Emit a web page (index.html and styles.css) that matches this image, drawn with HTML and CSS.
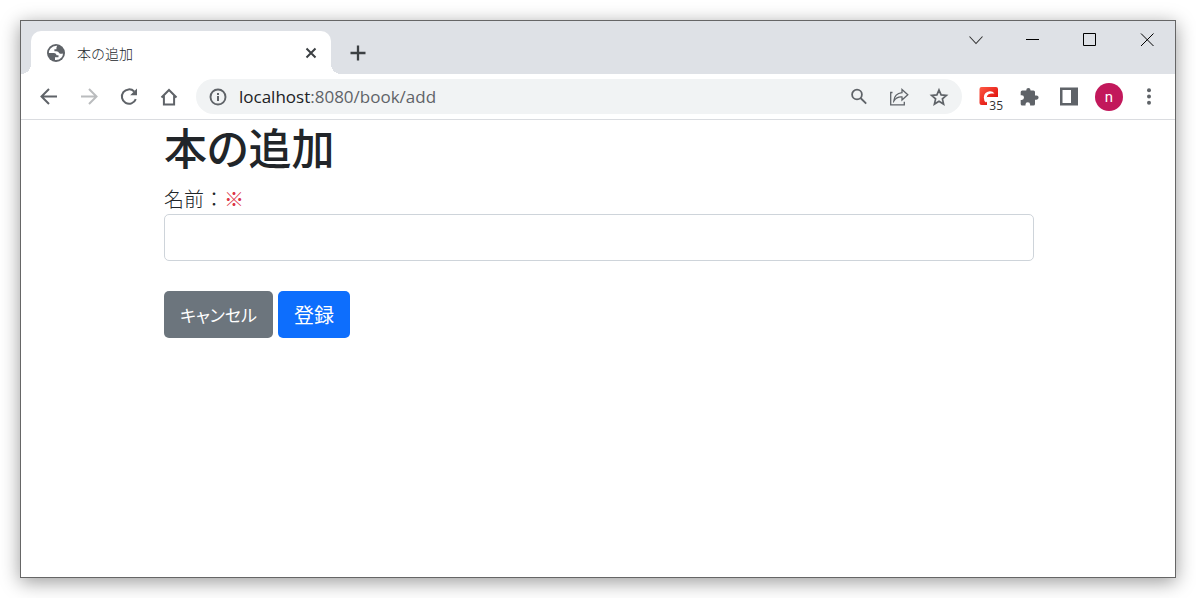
FILE: index.html
```html
<!DOCTYPE html>
<html lang="ja">
<head>
<meta charset="utf-8">
<meta name="viewport" content="width=device-width, initial-scale=1">
<title>本の追加</title>
<link rel="stylesheet" href="styles.css">
</head>
<body>
<div class="window">
  <header class="titlebar">
    <div class="tab">
      <svg class="tab-icon" width="18" height="18" viewBox="0 0 18 18" aria-hidden="true">
        <circle cx="9" cy="9" r="9" fill="#5f6368"/>
        <path d="M10.2 1.8 Q6 1.5 3.5 4.5 Q1.600 6.800 1.900 9 H7.200 Q9.400 9.200 9.600 11.200 H11.500 V13.200 H8 V16 Q12 16.400 14.500 13.500 Q16 11.500 16 9.500 Q13.800 10.300 12.300 9.200 Q11.500 7.200 9 7.300 H7.400 V5.300 H9.400 Q9.200 3 10.200 1.800Z" fill="#fff"/>
      </svg>
      <span class="tab-title">本の追加</span>
      <button class="icon-button" type="button" aria-label="閉じる">
        <svg width="12" height="12" viewBox="0 0 12 12" fill="none" stroke="#3c4043" stroke-width="2"><path d="M1.500 1.500l9 9M10.500 1.500l-9 9"/></svg>
      </button>
    </div>
    <button class="icon-button new-tab" type="button" aria-label="新しいタブ">
      <svg width="16" height="16" viewBox="0 0 16 16" fill="none" stroke="#3c4043" stroke-width="2.300"><path d="M8 .5v15M.5 8h15"/></svg>
    </button>
    <div class="window-controls">
      <button class="icon-button" type="button" aria-label="タブを検索">
        <svg width="14" height="14" viewBox="0 0 14 14" fill="none" stroke="#333" stroke-width="1.100"><path d="M.5 3.500l6.500 7 6.500-7"/></svg>
      </button>
      <button class="icon-button" type="button" aria-label="最小化">
        <svg width="14" height="14" viewBox="0 0 14 14" fill="none" stroke="#000"><path d="M0 6.500h13"/></svg>
      </button>
      <button class="icon-button" type="button" aria-label="最大化">
        <svg width="14" height="14" viewBox="0 0 14 14" fill="none" stroke="#000"><path d="M.5.5h12v12H.5z"/></svg>
      </button>
      <button class="icon-button" type="button" aria-label="ウィンドウを閉じる">
        <svg width="14" height="14" viewBox="0 0 14 14" fill="none" stroke="#000"><path d="M1 .5l12.500 12.500M13.500.5L1 13"/></svg>
      </button>
    </div>
  </header>

  <nav class="toolbar">
    <div class="tools">
      <button class="icon-button" type="button" aria-label="戻る">
        <svg width="20" height="20" viewBox="0 0 20 20" fill="none" stroke="#5f6368" stroke-width="2"><path d="M18 9.500H3M10 2L2.500 9.500l7.500 7.500"/></svg>
      </button>
      <button class="icon-button" type="button" aria-label="進む">
        <svg width="20" height="20" viewBox="0 0 20 20" fill="none" stroke="#babcbe" stroke-width="2"><path d="M2 9.500h15M10 2l7.500 7.500-7.500 7.500"/></svg>
      </button>
      <button class="icon-button" type="button" aria-label="再読み込み">
        <svg width="20" height="20" viewBox="0 0 20 20"><path d="M16.800 12.200A7.200 7.200 0 1 1 15.200 4.500" fill="none" stroke="#5f6368" stroke-width="2"/><path d="M18 1.500v6.800h-6.800z" fill="#5f6368"/></svg>
      </button>
      <button class="icon-button" type="button" aria-label="ホーム">
        <svg width="20" height="20" viewBox="0 0 20 20" fill="none" stroke="#5f6368" stroke-width="2"><path d="M2.500 10.500L10 3l7.500 7.500M4.900 8.800v8.700h10.200V8.800"/></svg>
      </button>
    </div>
    <div class="address">
      <svg width="18" height="18" viewBox="0 0 18 18" aria-hidden="true"><circle cx="9" cy="9" r="7.500" fill="none" stroke="#5f6368" stroke-width="1.900"/><path d="M8 8h2v5H8zM8 5h2v1.900H8z" fill="#5f6368"/></svg>
      <span class="url"><span class="host">localhost</span>:8080/book/add</span>
      <div class="tools">
        <button class="icon-button" type="button" aria-label="ズーム">
          <svg width="20" height="20" viewBox="0 0 20 20" fill="none" stroke="#5f6368" stroke-width="1.800"><circle cx="8" cy="7.500" r="4.900"/><path d="M11.500 11l5.700 5.700"/></svg>
        </button>
        <button class="icon-button" type="button" aria-label="共有">
          <svg width="20" height="20" viewBox="0 0 20 20" fill="none" stroke="#5f6368" stroke-width="1.300"><path d="M3.500 5.500H1.700v12.300h13.600v-3"/><path d="M13 2.500l5.800 5.300-5.800 5.200v-3Q8 9.500 4.800 14Q5.500 6.500 13 5.700z"/></svg>
        </button>
        <button class="icon-button" type="button" aria-label="ブックマーク">
          <svg width="20" height="20" viewBox="0 0 20 20" fill="none" stroke="#5f6368" stroke-width="1.700"><path d="M10 3l2.100 4.900 5.300.5-4 3.500 1.200 5.200-4.600-2.800-4.600 2.800 1.200-5.200-4-3.500 5.300-.5z"/></svg>
        </button>
      </div>
    </div>
    <div class="tools extensions">
      <button class="icon-button extension" type="button" aria-label="拡張機能 35">
        <svg width="20" height="20" viewBox="0 0 20 20"><defs><linearGradient id="red" x1="0" y1="0" x2="1" y2="1"><stop offset="0" stop-color="#ff5a45"/><stop offset="1" stop-color="#d80000"/></linearGradient></defs><path d="M2.500 0h14.500q2 0 2 2v8H8v8H2.500q-2 0-2-2V2q0-2 2-2z" fill="url(#red)"/><path d="M15.500 6.500Q13.500 3.800 10.500 4.200 5 5 4.800 10.500q0 3.500 2.200 5l2-2Q7.200 11.500 8 9q1-2.500 4-2.500z" fill="#fff"/></svg>
        <span class="badge">35</span>
      </button>
      <button class="icon-button" type="button" aria-label="拡張機能">
        <svg width="20" height="20" viewBox="0 0 20 20" fill="#5f6368"><path d="M17.500 8.500H16V5q0-1.500-1.500-1.500h-3V3a2 2 0 0 0-4.200 0v.5h-4Q1.700 3.500 1.700 5v3.300h1a2.300 2.300 0 0 1 0 4.600h-1V17q0 1.500 1.600 1.500h3.200v-1a2.300 2.300 0 0 1 4.600 0v1h3.400Q16 18.500 16 17v-4.300h1.500a2.100 2.100 0 0 0 0-4.200z"/></svg>
      </button>
      <button class="icon-button" type="button" aria-label="サイドパネル">
        <svg width="20" height="20" viewBox="0 0 20 20" fill="#5f6368"><path fill-rule="evenodd" d="M1 .5h18v18H1zM3.500 3v13h8.500V3z"/></svg>
      </button>
      <button class="avatar" type="button" aria-label="プロフィール">n</button>
      <button class="icon-button" type="button" aria-label="メニュー">
        <svg width="20" height="20" viewBox="0 0 20 20" fill="#5f6368"><circle cx="10" cy="3.200" r="2"/><circle cx="10" cy="9.500" r="2"/><circle cx="10" cy="15.800" r="2"/></svg>
      </button>
    </div>
  </nav>

  <main class="page">
    <h1 class="heading">本の追加</h1>
    <form class="form">
      <label class="label" for="name">名前：<span class="required">※</span></label>
      <input class="input" id="name" type="text" required>
      <div class="actions">
        <button class="button button-secondary" type="button">キャンセル</button>
        <button class="button button-primary" type="submit">登録</button>
      </div>
    </form>
  </main>
</div>
</body>
</html>
```

FILE: styles.css
```css
* {
  box-sizing: border-box;
}

body {
  margin: 0;
  min-height: 100vh;
  padding: 20px;
  display: flex;
  background: #fff;
  color: #212529;
  font-family: "Noto Sans CJK JP", sans-serif;
}

button {
  font: inherit;
  border: 0;
  padding: 0;
  cursor: pointer;
}

svg {
  display: block;
  flex: none;
}

.window {
  flex: 1;
  min-width: 0;
  display: flex;
  flex-direction: column;
  border: 1px solid #666;
  background: #fff;
  box-shadow: 0 4px 18px rgba(0, 0, 0, 0.4);
}

.titlebar {
  display: flex;
  align-items: flex-end;
  height: 53px;
  padding-left: 10px;
  background: #dee1e6;
}

.tab {
  position: relative;
  display: flex;
  align-items: center;
  gap: 12px;
  width: 300px;
  height: 43px;
  padding: 0 14px 0 16px;
  border-radius: 10px 10px 0 0;
  background: #fff;
}

.tab::before,
.tab::after {
  content: "";
  position: absolute;
  bottom: 0;
  width: 10px;
  height: 10px;
}

.tab::before {
  right: 100%;
  background: radial-gradient(circle at 0 0, transparent 10px, #fff 10px);
}

.tab::after {
  left: 100%;
  background: radial-gradient(circle at 100% 0, transparent 10px, #fff 10px);
}

.tab-title {
  flex: 1;
  font-size: 14px;
  font-weight: 300;
  line-height: 20px;
}

.icon-button {
  display: flex;
  align-items: center;
  justify-content: center;
  background: none;
}

.new-tab {
  height: 43px;
  margin-left: 19px;
}

.window-controls {
  align-self: flex-start;
  display: flex;
  gap: 43px;
  margin-left: auto;
  padding: 12px 21px 0 0;
}

.toolbar {
  display: flex;
  align-items: center;
  gap: 17px;
  height: 46px;
  padding: 0 16px 0 18px;
  border-bottom: 1px solid #dadce0;
}

.tools {
  display: flex;
  align-items: center;
  gap: 20px;
}

.address {
  flex: 1;
  display: flex;
  align-items: center;
  gap: 12px;
  height: 35px;
  padding: 0 13px;
  border-radius: 18px;
  background: #f1f3f4;
}

.url {
  flex: 1;
  color: #5f6368;
  font-family: "Open Sans", sans-serif;
  font-size: 17px;
  line-height: 24px;
}

.host {
  color: #202124;
}

.extension {
  position: relative;
}

.badge {
  position: absolute;
  right: -4px;
  bottom: -5px;
  padding-left: 1px;
  background: #fff;
  color: #333;
  font-family: "Open Sans", sans-serif;
  font-size: 12px;
  line-height: 12px;
}

.avatar {
  width: 28px;
  height: 28px;
  margin: 0 -4px;
  border-radius: 50%;
  background: #c2185b;
  color: #fff;
  font-family: Roboto, sans-serif;
  font-size: 15px;
  line-height: 28px;
}

.page {
  width: 100%;
  max-width: 900px;
  margin: 0 auto;
  padding: 0 14px 0 16px;
}

.heading {
  margin: 0;
  font-size: 43px;
  font-weight: 500;
  font-feature-settings: "palt";
  line-height: 52px;
}

.form {
  padding-top: 12px;
}

.label {
  display: block;
  font-size: 20px;
  font-weight: 300;
  line-height: 30px;
}

.required {
  color: #dc3545;
}

.input {
  display: block;
  width: 100%;
  height: 47px;
  padding: 8px 15px;
  border: 1px solid #ced4da;
  border-radius: 5px;
  background: #fff;
  font: inherit;
  font-size: 20px;
}

.actions {
  display: flex;
  gap: 5px;
  margin-top: 30px;
}

.button {
  height: 47px;
  padding: 0 16px;
  border-radius: 5px;
  color: #fff;
  font-size: 20px;
  line-height: 30px;
}

.button-secondary {
  background: #6c757d;
  font-size: 17px;
  font-feature-settings: "palt";
}

.button-primary {
  background: #0d6efd;
}
```
